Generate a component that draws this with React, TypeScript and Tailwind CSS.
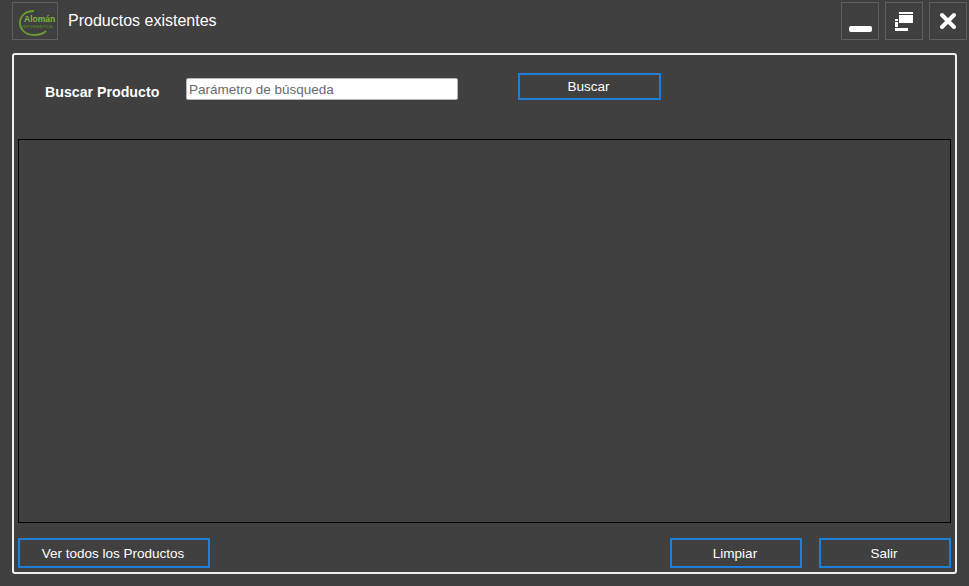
import React from 'react';

const WindowButton: React.FC<{ children: React.ReactNode }> = ({ children }) => (
  <button className="w-[38px] h-[38px] border border-[#5f5f5f] flex items-center justify-center">{children}</button>
);

const ActionButton: React.FC<{ label: string; className: string }> = ({ label, className }) => (
  <button className={`h-[30px] pt-[2px] pr-[2px] border-2 border-[#1e7ed8] text-[13.5px] text-white ${className}`}>{label}</button>
);

const Logo = () => (
  <svg width="44" height="36" viewBox="0 0 44 36" fill="none">
    <path d="M21 8 C12 8 7 13 7 20 C7 27 13 32 21 32 C26 32 30 31 33 28" stroke="#6a9e30" strokeWidth="1.8" />
    <text x="11" y="19" fontFamily="Liberation Sans, sans-serif" fontSize="8.5" fontWeight="700" fill="#7db53c">Alomán</text>
    <text x="9" y="24.5" fontFamily="Liberation Sans, sans-serif" fontSize="4.4" fontWeight="700" fill="#4f7a2a">INFORMÁTICA</text>
  </svg>
);

export default function App() {
  return (
    <div className="w-[969px] h-[586px] bg-[#404040] overflow-hidden font-['Liberation_Sans',Arial,sans-serif]">
      <header className="h-[53px] pt-[2px] pl-[12px] pr-[2px] flex items-start">
        <div className="w-[46px] h-[38px] border border-[#5f5f5f] flex items-center justify-center">
          <Logo />
        </div>
        <h1 className="ml-[10px] mt-[10px] text-[16px] leading-[18px] text-white">Productos existentes</h1>
        <div className="ml-auto flex gap-[6px]">
          <WindowButton>
            <div className="w-[23px] h-[6px] mt-[16px] rounded-[2px] bg-white" />
          </WindowButton>
          <WindowButton>
            <svg width="20" height="20" viewBox="0 0 20 20" fill="white">
              <rect x="5" y="1" width="14" height="2" />
              <rect x="5" y="4" width="14" height="8" />
              <rect x="1" y="8" width="3" height="2" />
              <rect x="1" y="11" width="3" height="5" />
              <rect x="1" y="17" width="13" height="3" />
            </svg>
          </WindowButton>
          <WindowButton>
            <svg width="18" height="18" viewBox="0 0 18 18" stroke="white" strokeWidth="4" strokeLinecap="round">
              <path d="M3 3l12 12M15 3L3 15" />
            </svg>
          </WindowButton>
        </div>
      </header>

      <main className="ml-[12px] w-[945px] h-[521px] border-2 border-[#f0f0f0] rounded-[3px] px-[4px] flex flex-col">
        <div className="h-[84px] flex items-start">
          <label className="ml-[27px] mt-[30px] w-[114px] text-[14.2px] leading-[15px] font-bold text-white whitespace-nowrap">Buscar Producto</label>
          <input
            className="ml-[27px] mt-[23px] w-[272px] h-[22px] bg-white rounded-[2px] border border-[#b5b5b5] px-[2px] text-[13.5px] text-[#5a5a5a] placeholder:text-[#6a6a6a] outline-none"
            placeholder="Parámetro de búsqueda"
          />
          <ActionButton label="Buscar" className="ml-[60px] mt-[18px] w-[143px] !h-[27px]" />
        </div>
        <div className="w-[933px] h-[384px] border border-black" />
        <div className="mt-[15px] flex">
          <ActionButton label="Ver todos los Productos" className="w-[192px]" />
          <ActionButton label="Limpiar" className="ml-auto w-[132px]" />
          <ActionButton label="Salir" className="ml-[17px] w-[132px]" />
        </div>
      </main>
    </div>
  );
}
